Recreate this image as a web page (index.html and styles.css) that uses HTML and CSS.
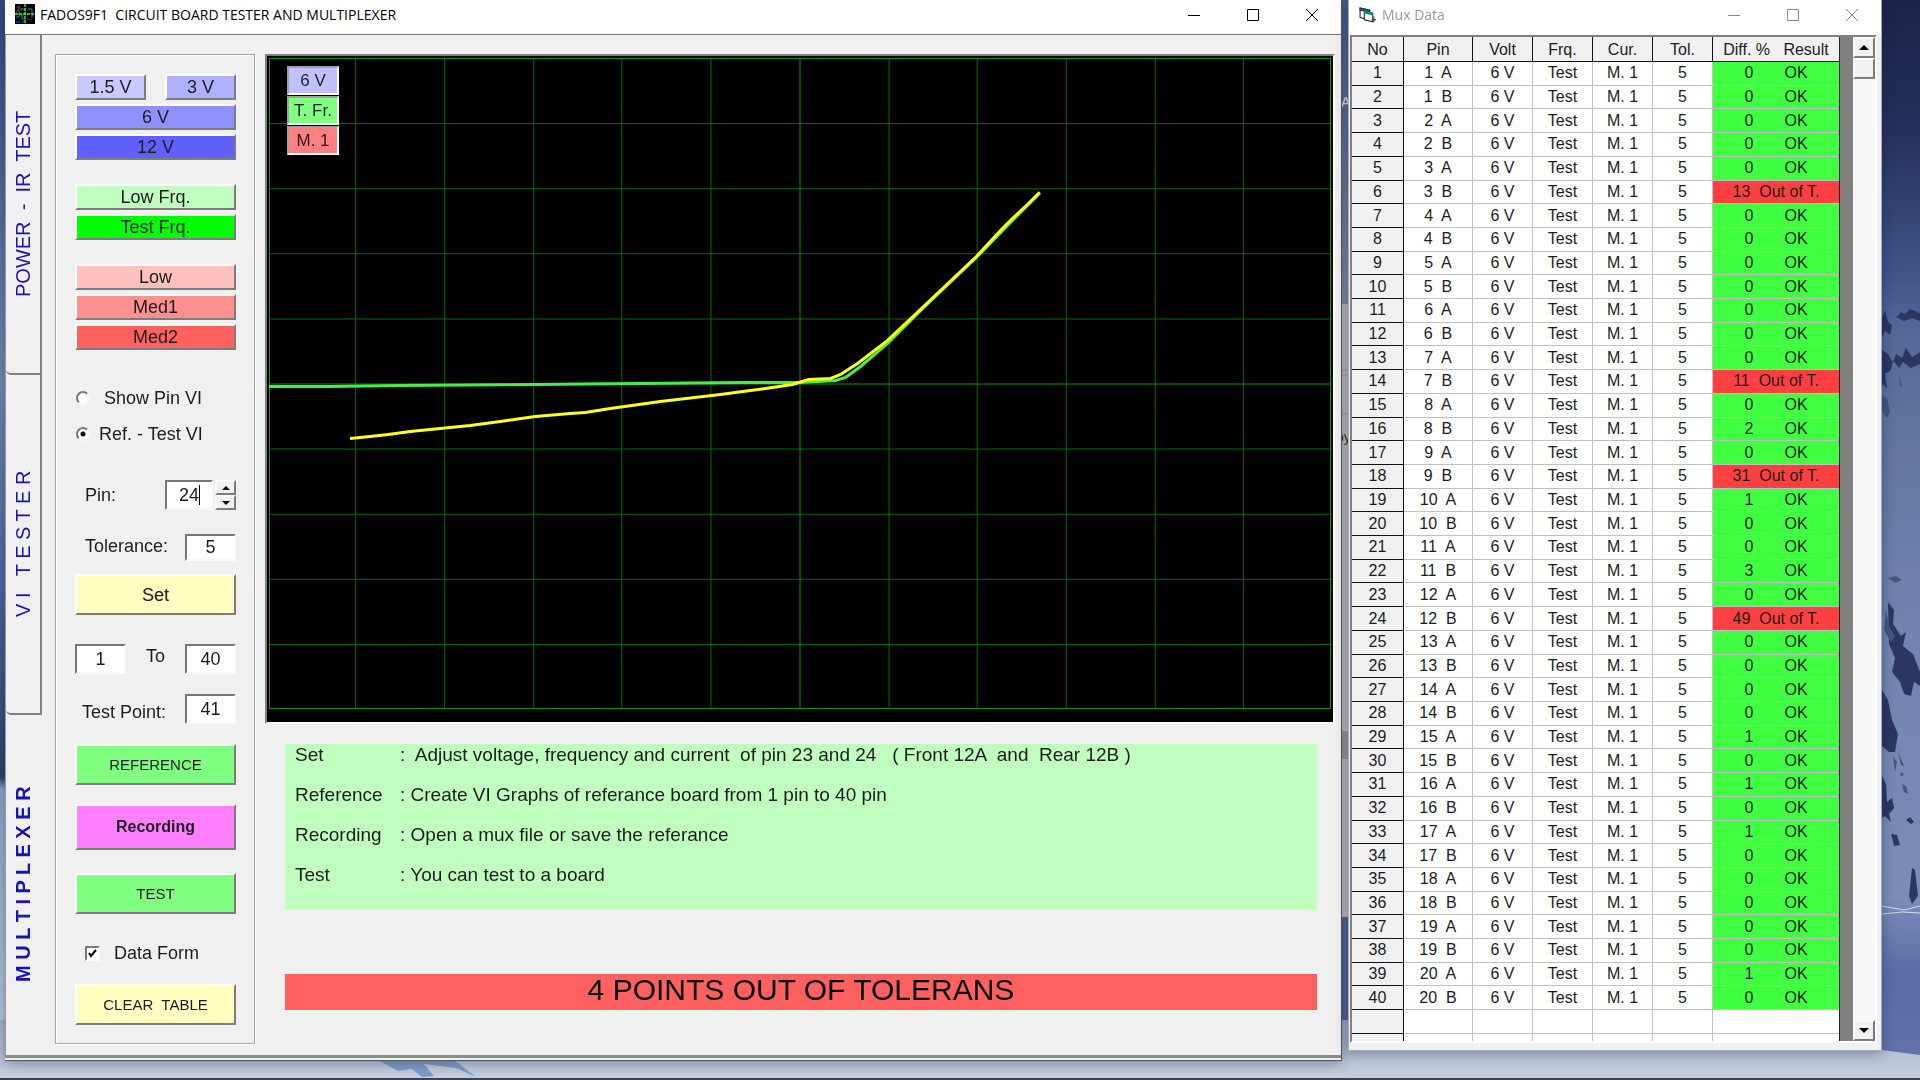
FILE: index.html
```html
<!DOCTYPE html>
<html lang="en">
<head>
  <meta charset="UTF-8" />
  <meta name="viewport" content="width=device-width, initial-scale=1.0"/>
  <title>FADOS9F1</title>
  <link rel="stylesheet" href="styles.css">
</head>
<body>
  <!-- wallpaper -->
  <svg class="wallpaper" viewBox="0 0 1920 1080" preserveAspectRatio="none" aria-hidden="true">
    <defs>
      <linearGradient id="sky" x1="0" y1="0" x2="0" y2="1">
        <stop offset="0" stop-color="#1b2347"/>
        <stop offset="0.12" stop-color="#252f5c"/>
        <stop offset="0.26" stop-color="#42568c"/>
        <stop offset="0.3" stop-color="#53669a"/>
        <stop offset="0.4" stop-color="#62759f"/>
        <stop offset="0.6" stop-color="#7384b4"/>
        <stop offset="0.83" stop-color="#7c8cb8"/>
        <stop offset="0.9" stop-color="#5b6da6"/>
        <stop offset="1" stop-color="#6474ab"/>
      </linearGradient>
      <linearGradient id="left" x1="0" y1="0" x2="0" y2="1">
        <stop offset="0" stop-color="#33457e"/>
        <stop offset="0.35" stop-color="#7389b0"/>
        <stop offset="0.55" stop-color="#4f639c"/>
        <stop offset="0.72" stop-color="#343f68"/>
        <stop offset="0.73" stop-color="#8fa3c6"/>
        <stop offset="1" stop-color="#c3cfdf"/>
      </linearGradient>
      <linearGradient id="middle" x1="0" y1="0" x2="0" y2="1">
        <stop offset="0" stop-color="#4a5d8c"/>
        <stop offset="1" stop-color="#8796a8"/>
      </linearGradient>
      <linearGradient id="snow" x1="0" y1="0" x2="0" y2="1">
        <stop offset="0" stop-color="#a5b3c6"/>
        <stop offset="1" stop-color="#c5d0e0"/>
      </linearGradient>
    </defs>
    <rect width="1920" height="1080" fill="url(#sky)"/>
    <rect width="20" height="1080" fill="url(#left)"/>
    <rect x="1330" width="30" height="304" fill="url(#middle)"/>
    <text x="1341" y="107" font-size="14" fill="#fff">A</text>
    <rect x="1330" y="304" width="30" height="613" fill="#c8c8c8"/>
    <path d="M1330 370h30M1330 375h30M1330 414h30" stroke="#aaa"/>
    <text x="1336" y="442" font-size="14" fill="#333">oy</text>
    <rect x="1330" y="731" width="30" height="28" fill="#a0a0a0"/>
    <rect x="1330" y="917" width="30" height="103" fill="#56689a"/>
    <path d="M0 1020H1360L1882 1050L1920 1055V1080H0z" fill="url(#snow)"/>
    <path d="M378 1060l20 11 14-2 10 8 12-1-10-12 32 4 20 9-22-17z" fill="#7f9bc8"/>
    <!-- trees on the slope -->
    <g fill="#2b3762">
      <path d="M1882 318l3-8 3 12 4 3-2 10-5-4-3 6zM1896 318l5-6 4 2 5-5 10 4v8l-8-3-8 3-8-4z"/>
      <path d="M1882 350l6 4 5 9 3-9 6 4 4-10 6 9 8-5v12l-9 4-8-6-4 6-6-8-2 10-6 4 2 14-5-4z"/>
      <path d="M1888 602l6 8-1 14 8 12 5-4-3 14 10 8 7 18v14l-6-4-3 14-7-2-4-12-8-10 3-14-6-14z"/>
      <path d="M1882 690l6 10 4 20 6 14-3 18h-6l-7-6z"/>
      <path d="M1882 776l4 8 1 18 5-4 2 10-5 6 2 8-6-6-3 2zM1906 820l4-3 4 5-3 2zM1891 834l6 1 3 10-6 1zM1912 868l3 2 3 26-6 8-3-8z"/>
    </g>
    <g fill="#46557f">
      <path d="M1882 396l5 2 3 14-3 6-5-8zM1899 376l3 9-2 3zM1886 610l3 16 6 10-4 6-7-12zM1893 756l4 6-2 10zM1898 752l6 14-3-1z"/>
      <path d="M1888 578l8-2 6 4-7 3zM1902 784l4 2 2 8-4-2zM1900 772l4 2-3 3z"/>
    </g>
    <path d="M1882 906l22 4 16-4M1882 914l20-2 18 1" fill="none" stroke="#d5dded"/>
    <rect y="1078" width="1920" height="2" fill="#3b4152"/>
  </svg>

  <div class="desktop">
    <main class="window main-window">
      <header class="titlebar">
        <svg class="app-icon" viewBox="0 0 20 20" aria-hidden="true">
          <rect width="20" height="20" fill="#000"/>
          <path d="M5 5h6M13 5h4v8" fill="none" stroke="#2a8f96"/>
          <path d="M1 13h3V6M7 10v5h3" fill="none" stroke="#2a8f96"/>
          <path d="M1 9l4-6M12 15c4 2 5-2 6-5M2 4l3-3" fill="none" stroke="#b3201c"/>
          <path d="M1 18h4M7 18h2" stroke="#1520a0" stroke-width="2"/>
          <path d="M10 0v20M0 10h20" stroke="#3df03a" stroke-width="1.4" stroke-dasharray="3 1"/>
        </svg>
        <h1 class="title">FADOS9F1&nbsp; CIRCUIT BOARD TESTER AND MULTIPLEXER</h1>
        <div class="win-buttons">
          <button aria-label="Minimize"><svg viewBox="0 0 14 14"><path d="M1 7.5h12"/></svg></button>
          <button aria-label="Maximize"><svg viewBox="0 0 14 14"><path d="M1.5 1.5h11v11h-11z"/></svg></button>
          <button aria-label="Close"><svg viewBox="0 0 14 14"><path d="M1 1l12 12M13 1L1 13"/></svg></button>
        </div>
      </header>

      <div class="workspace">
        <nav class="tabs">
          <button class="tab">POWER  -  IR  TEST</button>
          <button class="tab">V I   T E S T E R</button>
          <button class="tab active">M U L T I P L E X E R</button>
        </nav>

        <form class="controls" onsubmit="return false">
          <div class="group">
            <div class="pair">
              <button class="btn v1">1.5 V</button>
              <button class="btn v3">3 V</button>
            </div>
            <button class="btn v6">6 V</button>
            <button class="btn v12">12 V</button>
          </div>
          <div class="group">
            <button class="btn lowfrq">Low Frq.</button>
            <button class="btn testfrq">Test Frq.</button>
          </div>
          <div class="group">
            <button class="btn low">Low</button>
            <button class="btn med1">Med1</button>
            <button class="btn med2">Med2</button>
          </div>

          <div class="modes">
            <label class="mode wide"><input type="radio" name="mode">Show Pin VI</label>
            <label class="mode"><input type="radio" name="mode" checked>Ref. - Test VI</label>
          </div>

          <div class="field pin">
            <label for="pin">Pin:</label>
            <span class="caret"><input class="box" id="pin" type="text" value="24"></span>
            <span class="spinner">
              <button aria-label="Next pin"><i class="arrow up"></i></button>
              <button aria-label="Previous pin"><i class="arrow down"></i></button>
            </span>
          </div>
          <div class="field tolerance">
            <label for="tol">Tolerance:</label>
            <input class="box short" id="tol" type="text" value="5">
          </div>
          <button class="btn big yellow">Set</button>

          <div class="field range">
            <input class="box" id="from" type="text" value="1" aria-label="From pin">
            <label for="to">To</label>
            <input class="box" id="to" type="text" value="40">
          </div>
          <div class="field point">
            <label for="point">Test Point:</label>
            <input class="box" id="point" type="text" value="41">
          </div>

          <div class="actions">
            <button class="btn big caps green">REFERENCE</button>
            <button class="btn big record">Recording</button>
            <button class="btn big caps green">TEST</button>
          </div>
          <label class="data-form"><input type="checkbox" checked>Data Form</label>
          <button class="btn big caps yellow">CLEAR&nbsp; TABLE</button>
        </form>

        <section class="display">
          <div class="scope">
            <svg viewBox="267 56 1065 665" preserveAspectRatio="none" role="img" aria-label="VI graph">
              <path class="grid" d="M355.5 58V708M444.5 58V708M533.5 58V708M621.5 58V708M710.5 58V708M888.5 58V708M976.5 58V708M1065.5 58V708M1154.5 58V708M1242.5 58V708M269 123.5H1329M269 188.5H1329M269 253.5H1329M269 318.5H1329M269 448.5H1329M269 513.5H1329M269 578.5H1329M269 643.5H1329"/>
              <path class="axis" d="M799.5 58V708M269 383.5H1329M269.5 58.5H1329.5V707.5H269.5z"/>
              <polyline class="ref" points="269,386 330,386 400,385 533,384 640,383 740,382 800,382 835,380 845,377 860,366 888,342 921,309 976,257 1010,222 1039,193"/>
              <polyline class="test" points="350,438 370,436 388,434 410,431 440,428 470,425 500,421 535,416 570,413 585,412 610,408 660,401 720,394 765,388 792,384 808,379 830,378 840,374 857,363 887,340 920,309 976,256 1000,230 1012,218 1025,206 1039,192"/>
            </svg>
            <ul class="badges">
              <li class="b-volt">6 V</li>
              <li class="b-frq">T. Fr.</li>
              <li class="b-cur">M. 1</li>
            </ul>
          </div>

          <dl class="help">
            <dt>Set</dt><dd>:  Adjust voltage, frequency and current  of pin 23 and 24   ( Front 12A  and  Rear 12B )</dd>
            <dt>Reference</dt><dd>: Create VI Graphs of referance board from 1 pin to 40 pin</dd>
            <dt>Recording</dt><dd>: Open a mux file or save the referance</dd>
            <dt>Test</dt><dd>: You can test to a board</dd>
          </dl>
          <p class="alert">4 POINTS OUT OF TOLERANS</p>
        </section>
      </div>
    </main>

    <aside class="window mux-window">
      <header class="titlebar inactive">
        <svg class="form-icon" viewBox="0 0 16 16" aria-hidden="true">
          <path d="M1 1l9 2v9l-9-2z" fill="#fff" stroke="#222"/>
          <path d="M1 1l9 2v2L1 3z" fill="#0a8f8f" stroke="#222"/>
          <path d="M5 5l8 1v8l-8-2z" fill="#fff" stroke="#222"/>
          <path d="M5 4l8 1v3L5 6z" fill="#0a8f8f"/>
          <path d="M14 9v5M12 12h4" stroke="#333"/>
        </svg>
        <h2 class="title">Mux Data</h2>
        <div class="win-buttons">
          <button aria-label="Minimize"><svg viewBox="0 0 14 14"><path d="M1 7.5h12"/></svg></button>
          <button aria-label="Maximize"><svg viewBox="0 0 14 14"><path d="M1.5 1.5h11v11h-11z"/></svg></button>
          <button aria-label="Close"><svg viewBox="0 0 14 14"><path d="M1 1l12 12M13 1L1 13"/></svg></button>
        </div>
      </header>
      <div class="sheet">
        <div class="table-wrap">
          <table class="mux">
            <colgroup>
              <col class="c-no"><col class="c-pin"><col class="c-mid"><col class="c-mid"><col class="c-mid"><col class="c-mid"><col>
            </colgroup>
            <thead>
              <tr><th>No</th><th>Pin</th><th>Volt</th><th>Frq.</th><th>Cur.</th><th>Tol.</th><th>Diff. %   Result</th></tr>
            </thead>
            <tbody id="rows"></tbody>
          </table>
        </div>
        <div class="scrollbar">
          <button aria-label="Scroll up"><i class="arrow up"></i></button>
          <button class="thumb" aria-label="Scroll position"></button>
          <button class="end" aria-label="Scroll down"><i class="arrow down"></i></button>
        </div>
      </div>
    </aside>
  </div>

  <script>
    const tolerance = 5;
    // difference in % for each of the 40 points
    const diffs = [0,0,0,0,0,13,0,0,0,0,0,0,0,11,0,2,0,31,1,0,0,3,0,49,0,0,0,0,1,0,1,0,1,0,0,0,0,0,1,0];
    const rows = document.getElementById("rows");

    function addRow(cells, className) {
      const tr = rows.insertRow();
      cells.forEach((text, i) => {
        const cell = document.createElement(i === 0 ? "th" : "td");
        cell.textContent = text;
        tr.appendChild(cell);
      });
      tr.className = className;
    }

    diffs.forEach((diff, i) => {
      const pin = Math.floor(i / 2) + 1;
      const side = i % 2 ? "B" : "A";
      const bad = diff > tolerance;
      const result = bad ? diff + "  Out of T." : diff + "       OK";
      addRow([i + 1, pin + "  " + side, "6 V", "Test", "M. 1", tolerance, result], bad ? "bad" : "ok");
    });
    // empty row, and the one cut off by the bottom edge
    addRow(["\u00a0", "", "", "", "", "", ""], "empty");
    addRow(["", "", "", "", "", "", ""], "cut");
  </script>
</body>
</html>
```

FILE: styles.css
```css
* {
  box-sizing: border-box;
}
body {
  margin: 0;
  font-family: "Liberation Sans", Arial, sans-serif;
  font-size: 18px;
  color: #1c1c1c;
  background-color: #53669a;
}
button, input {
  font: inherit;
  color: inherit;
  margin: 0;
  padding: 0;
}
.wallpaper {
  position: fixed;
  inset: 0;
  width: 100%;
  height: 100%;
}
.desktop {
  position: relative;
  display: grid;
  grid-template-columns: 1337fr 534fr;
  column-gap: 6px;
  min-height: 100vh;
  padding: 0 38px 19px 5px;
}
.window {
  display: flex;
  flex-direction: column;
  min-width: 0;
  background-color: #f0f0f0;
  box-shadow: 0 2px 12px rgba(20, 30, 60, 0.4);
}
.main-window {
  border: 1px solid #555;
  border-top: none;
  border-left: none;
}
.mux-window {
  margin-bottom: 10px;
  border: 1px solid #aaa;
  border-top: none;
}

/* title bars */
.titlebar {
  display: flex;
  align-items: flex-start;
  height: 34px;
  padding-top: 4px;
  padding-left: 10px;
  background-color: #fff;
  color: #000;
}
.app-icon {
  width: 20px;
  height: 20px;
  margin-right: 5px;
}
.form-icon {
  width: 17px;
  height: 17px;
  margin: 3px 6px 0 0;
}
.title {
  flex: 1;
  margin: 0;
  font-family: "Open Sans", "Noto Sans", sans-serif;
  font-size: 14px;
  font-weight: 400;
  line-height: 22px;
  white-space: nowrap;
}
.win-buttons {
  display: flex;
}
.win-buttons button {
  width: 59px;
  height: 22px;
  border: none;
  background: none;
}
.win-buttons svg {
  display: block;
  width: 14px;
  height: 14px;
  margin: 0 auto;
}
.win-buttons path {
  fill: none;
  stroke: #000;
}
.inactive {
  height: 35px;
  color: #999;
}
.inactive .win-buttons path {
  stroke: #888;
}

/* main window */
.workspace {
  flex: 1;
  display: flex;
  margin-bottom: 2px;
  border-top: 1px solid #777;
  border-bottom: 3px solid #8a8c8a;
}
.tabs {
  display: flex;
  flex-direction: column;
  width: 37px;
  border-left: 1px solid #999;
}
/* the tabs are turned upside down, so top/left here draw bottom/right */
.tab {
  flex: 1;
  border: solid #808080;
  border-width: 2px 0 0 2px;
  border-radius: 0 5px 5px 0;
  background: none;
  color: #1a12b4;
  font-size: 20px;
  white-space: pre;
  writing-mode: vertical-rl;
  transform: rotate(180deg);
}
.tab.active {
  border-color: transparent;
  font-weight: 700;
}
.controls {
  display: flex;
  flex-direction: column;
  width: 200px;
  margin: 19px 10px 11px 13px;
  padding: 19px 18px 18px 19px;
  border: 1px solid #a5a5a5;
  box-shadow: inset 1px 1px #fff, 1px 1px #fff;
}
.group {
  display: flex;
  flex-direction: column;
  gap: 4px;
  margin-bottom: 24px;
}
.pair {
  display: flex;
  justify-content: space-between;
}
.pair .btn {
  width: 71px;
}
.btn {
  height: 26px;
  border: 2px solid;
  border-color: #fdfdfd #7c7c7c #7c7c7c #fdfdfd;
  line-height: 22px;
}
.v1 { background-color: #c9c9ff; }
.v3 { background-color: #b0b0ff; }
.v6 { background-color: #9090ff; }
.v12 { background-color: #6060ff; }
.lowfrq { background-color: #c0ffc0; }
.testfrq { background-color: #00ff00; }
.low { background-color: #ffc0c0; }
.med1 { background-color: #ff9090; }
.med2 { background-color: #ff6060; }
.green { background-color: #80ff80; }
.yellow { background-color: #ffffc0; }
.big {
  height: 41px;
  flex-shrink: 0;
}
.caps {
  font-size: 15px;
}
.record {
  height: 46px;
  margin-bottom: 4px;
  background-color: #ff80ff;
  font-size: 16px;
  font-weight: 700;
}
.modes {
  display: flex;
  flex-direction: column;
  gap: 12px;
  margin: 12px 0 34px;
}
.mode {
  display: flex;
  align-items: center;
  gap: 9px;
  height: 24px;
}
.mode.wide {
  gap: 14px;
}
.mode input {
  appearance: none;
  width: 14px;
  height: 14px;
  margin-left: 1px;
  border: 2px solid;
  border-color: #777 #f8f8f8 #f8f8f8 #777;
  border-radius: 50%;
  background-color: #fff;
}
.mode input:checked {
  background-image: radial-gradient(circle, #000 0 2px, #fff 3px);
}
.field {
  display: flex;
  align-items: center;
  justify-content: space-between;
  height: 30px;
}
.field label {
  line-height: 22px;
}
.box {
  width: 51px;
  height: 30px;
  border: 2px solid;
  border-color: #777 #fafafa #fafafa #777;
  border-radius: 0;
  background-color: #fff;
  text-align: center;
}
.box:focus {
  outline: none;
}
.box.short {
  height: 27px;
}
.pin, .tolerance {
  padding-left: 10px;
}
.pin .caret {
  position: relative;
  margin-left: auto;
}
.pin .box {
  display: block;
  width: 48px;
}
/* text cursor behind the number */
.caret::after {
  content: "";
  position: absolute;
  top: 5px;
  right: 13px;
  width: 1px;
  height: 20px;
  background-color: #000;
}
.spinner {
  display: flex;
  flex-direction: column;
  margin-left: 2px;
}
.spinner button, .scrollbar button {
  display: grid;
  place-items: center;
  width: 21px;
  height: 15px;
  border: 2px solid;
  border-color: #fafafa #7c7c7c #7c7c7c #fafafa;
  background-color: #f0f0f0;
}
.arrow {
  border: 4px solid transparent;
}
.arrow.up {
  border-top: none;
  border-bottom-color: #000;
}
.arrow.down {
  border-bottom: none;
  border-top-color: #000;
}
.tolerance {
  height: 27px;
  margin: 24px 0 13px;
}
.tolerance label {
  padding-bottom: 4px;
}
.range {
  margin: 29px 0 20px;
}
.range label {
  padding-bottom: 6px;
}
.point {
  padding-left: 7px;
}
.point label {
  padding-top: 6px;
}
.actions {
  display: flex;
  flex-direction: column;
  gap: 19px;
  margin-top: 20px;
}
.data-form {
  display: flex;
  align-items: center;
  gap: 14px;
  margin: auto 0;
  padding: 8px 0 0 10px;
}
.data-form input {
  appearance: none;
  width: 15px;
  height: 15px;
  border: 2px solid;
  border-color: #777 #fafafa #fafafa #777;
  background-color: #fff;
}
.data-form input:checked {
  background: #fff url("data:image/svg+xml,%3Csvg xmlns='http://www.w3.org/2000/svg' viewBox='0 0 11 11'%3E%3Cpath d='M2 5l2 3 5-6' fill='none' stroke='black' stroke-width='2'/%3E%3C/svg%3E") center / 11px no-repeat;
}

/* right side of the main window */
.display {
  flex: 1;
  display: flex;
  flex-direction: column;
  min-width: 0;
  padding: 19px 6px 45px 0;
}
.scope {
  position: relative;
  flex: 1;
  min-height: 300px;
  border: 2px solid;
  border-color: #808080 #fff #fff #808080;
  background-color: #000;
}
.scope svg {
  position: absolute;
  width: 100%;
  height: 100%;
}
.scope path, .scope polyline {
  fill: none;
  vector-effect: non-scaling-stroke;
}
.grid { stroke: #066a0a; }
.axis { stroke: #159015; }
.ref {
  stroke: #45f045;
  stroke-width: 3;
}
.test {
  stroke: #ffff20;
  stroke-width: 3;
}
.badges {
  position: absolute;
  top: 10px;
  left: 20px;
  display: flex;
  flex-direction: column;
  gap: 1px;
  width: 52px;
  margin: 0;
  padding: 0;
  list-style: none;
  text-align: center;
}
.badges li {
  border: 2px solid;
  border-color: #a0a0a0 #fff #fff #a0a0a0;
  font-size: 17px;
  line-height: 25px;
}
.b-volt { background-color: #c0c0ff; }
.b-frq { background-color: #80ff80; }
.b-cur { background-color: #ff8080; }
.help {
  display: grid;
  grid-template-columns: 105px 1fr;
  row-gap: 18px;
  margin: 20px 18px 64px 20px;
  padding: 0 0 24px 10px;
  background-color: #c0ffc0;
  font-size: 19px;
  line-height: 22px;
}
.help dd {
  margin: 0;
  white-space: pre-wrap;
}
.alert {
  margin: 0 18px 0 20px;
  background-color: #ff6060;
  color: #000;
  font-size: 30px;
  line-height: 32px;
  padding-bottom: 4px;
  text-align: center;
}

/* mux data window */
.sheet {
  flex: 1;
  display: flex;
  margin: 0 4px 7px 1px;
  border: 2px solid;
  border-color: #808080 #fff #fff #808080;
}
.table-wrap {
  flex: 1;
  padding-right: 13px;
  background-color: #808080;
}
.mux {
  width: 100%;
  height: 100%;
  border-collapse: separate;
  border-spacing: 0;
  table-layout: fixed;
  background-color: #fff;
  font-size: 16px;
  line-height: 18px;
  text-align: center;
  border-right: 1px solid #222;
}
.c-no { width: 52px; }
.c-pin { width: 69px; }
.c-mid { width: 60px; }
.mux th, .mux td {
  padding: 0;
  font-weight: 400;
  white-space: pre;
  border-right: 1px solid #c0c0c0;
  border-bottom: 1px solid #c0c0c0;
}
.mux th {
  background-color: #f0f0f0;
  border-right-color: #111;
  border-bottom-color: #111;
}
.mux thead th {
  height: 25px;
  padding-top: 2px;
}
.mux th:last-child, .mux td:last-child {
  border-right: none;
}
.ok td:last-child { background-color: #40ff40; }
.bad td:last-child { background-color: #ff4040; }
.mux .cut th, .mux .cut td {
  height: 7px;
  border-bottom: none;
}
.scrollbar {
  display: flex;
  flex-direction: column;
  width: 22px;
  background-color: #f8f8f8;
}
.scrollbar button {
  width: 22px;
  height: 21px;
}
.scrollbar .end {
  margin-top: auto;
}
.scrollbar .arrow {
  border-width: 5px;
}
.scrollbar .arrow.up {
  border-top: none;
}
.scrollbar .arrow.down {
  border-bottom: none;
}
```
